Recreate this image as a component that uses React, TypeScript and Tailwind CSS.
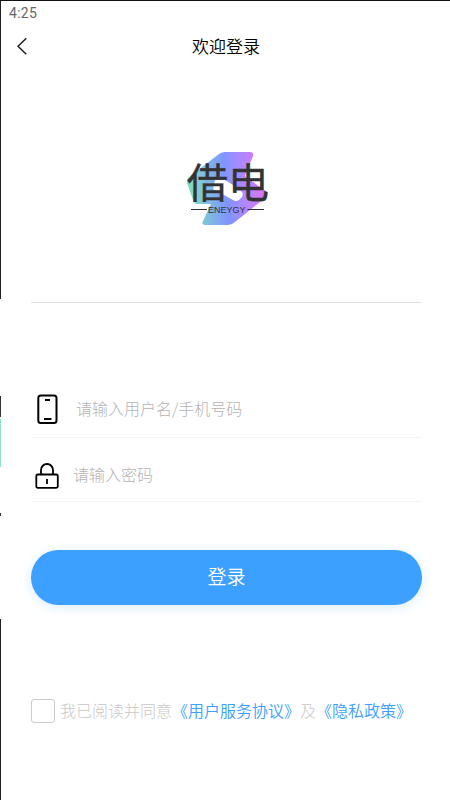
import { useState } from "react";

// 左侧露出的上一页边缘
const EdgeStrip = () => (
  <div className="w-px shrink-0 flex flex-col">
    <div className="h-[298px] bg-[#222125]" />
    <div className="h-[97px]" />
    <div className="h-[21px] bg-[#333333]" />
    <div className="h-[2px]" />
    <div className="h-[48px] bg-[#8fe3c6]" />
    <div className="h-[46px]" />
    <div className="h-[3px] bg-[#333333]" />
    <div className="h-[103px]" />
    <div className="flex-1 bg-[#222125]" />
  </div>
);

const Logo = () => (
  <svg width="90" height="80" viewBox="0 0 90 80">
    <defs>
      <linearGradient id="logoFill" gradientUnits="userSpaceOnUse" x1="4" y1="42" x2="84" y2="36">
        <stop offset="0" stopColor="#7fe3b4" />
        <stop offset="0.22" stopColor="#7fc0dc" />
        <stop offset="0.48" stopColor="#7f96ff" />
        <stop offset="0.75" stopColor="#b884ff" />
        <stop offset="1" stopColor="#e472f8" />
      </linearGradient>
    </defs>
    <path
      d="M42 3H67Q71 3 70 7L62 27L81 41Q85 45 82 49L52 73Q49 76 45 76H22Q18 76 20 72L28 55H14Q11 55 10 51L4 34Q3 31 6 28L36 5Q39 3 42 3Z"
      fill="url(#logoFill)"
    />
    <path d="M32 31H42L50 36V41L58 42Q61 44 59 48L56 51Q53 53 50 51L30 40Z" fill="#fff" />
    <text x="4" y="48.5" fontSize="41" fill="#333333" stroke="#333333" strokeWidth="0.4" className="font-['Noto_Sans_CJK_SC',sans-serif]">借电</text>
    <path d="M8 60.5H24M64.5 60.5H81" stroke="#333333" strokeWidth="1" />
    <text x="25" y="64" fontSize="9" textLength="37.5" fill="#333333" className="font-['Liberation_Sans',Arial,sans-serif]">ENEYGY</text>
  </svg>
);

const PhoneIcon = () => (
  <svg width="22" height="30" viewBox="0 0 22 30" fill="none" stroke="#000" strokeWidth="2">
    <rect x="2.3" y="1.5" width="18.2" height="27.5" rx="2.5" />
    <path d="M9 6H14M8 25H15.5" />
  </svg>
);

const LockIcon = () => (
  <svg width="24" height="27" viewBox="0 0 24 27" fill="none" stroke="#000" strokeWidth="1.8">
    <rect x="1.3" y="12.5" width="21.5" height="13.3" rx="1.5" />
    <path d="M6 12.5V8A6 6 0 0 1 18 8V12.5M12 17V22" />
  </svg>
);

const App = () => {
  const [username, setUsername] = useState<string>("");
  const [password, setPassword] = useState<string>("");
  const [agreed, setAgreed] = useState<boolean>(false);

  return (
    <div className="w-[450px] h-[800px] bg-white border-t border-[#111014] flex overflow-hidden font-['Noto_Sans_CJK_SC',sans-serif]">
      <EdgeStrip />
      <div className="flex-1 flex flex-col">
        {/* 状态栏 */}
        <div className="h-6 pl-2 flex items-center font-[Roboto,sans-serif] text-sm tracking-[0.3px] leading-6 text-[#666666]">4:25</div>

        {/* 标题栏 */}
        <div className="h-[42px] pl-[15px] pr-[14px] flex items-center">
          <button className="w-[14px]">
            <svg width="14" height="18" viewBox="0 0 14 18" fill="none" stroke="#1a1a1a" strokeWidth="1.4">
              <path d="M10.3 1.3L2 9.3L10.3 17.3" />
            </svg>
          </button>
          <h1 className="flex-1 text-center text-[17px] leading-6 font-[350] text-black">欢迎登录</h1>
          <div className="w-[14px]" />
        </div>

        <div className="ml-[30px] mr-7 h-[236px] pt-[82px] pl-[1px] border-b border-[#e2e2e2] flex justify-center">
          <div className="w-[88px]">
            <Logo />
          </div>
        </div>

        {/* 登录表单 */}
        <div className="ml-[30px] mr-7 mt-[77px] flex flex-col">
          <div className="h-[58px] pl-[5px] flex items-center border-b border-[#f4f4f4]">
            <PhoneIcon />
            <input
              value={username}
              onChange={(e) => setUsername(e.target.value)}
              placeholder="请输入用户名/手机号码"
              className="ml-[18px] mb-[2px] flex-1 text-base font-light outline-none placeholder:text-[#b4b4b4]"
            />
          </div>
          <div className="h-16 pt-[11px] pl-1 flex items-center border-b border-[#f4f4f4]">
            <LockIcon />
            <input
              type="text"
              value={password}
              onChange={(e) => setPassword(e.target.value)}
              placeholder="请输入密码"
              className="ml-[14px] mb-[2px] flex-1 text-base font-light outline-none placeholder:text-[#b4b4b4]"
            />
          </div>
          <button className="mt-12 h-[55px] pb-[2px] rounded-full bg-[#3ba0ff] text-[19px] font-[350] text-white shadow-[0_2px_12px_rgba(59,160,255,0.2)]">
            登录
          </button>
        </div>

        {/* 协议 */}
        <div className="ml-[30px] mt-[94px] h-6 flex items-center text-base whitespace-nowrap text-[#c8c8c8]">
          <button
            onClick={() => setAgreed(!agreed)}
            className={`w-6 h-6 mr-[5px] rounded-[3px] border border-[#cccccc] ${agreed ? "bg-[#3ba0ff]" : "bg-white"}`}
          />
          <div className="pb-[2px] flex font-[350]">
            <span className="font-light">我已阅读并同意</span>
            <a className="text-[#3ba0ff]">《用户服务协议》</a>
            <span className="font-light">及</span>
            <a className="text-[#3ba0ff]">《隐私政策》</a>
          </div>
        </div>
      </div>
    </div>
  );
};

export default App;
